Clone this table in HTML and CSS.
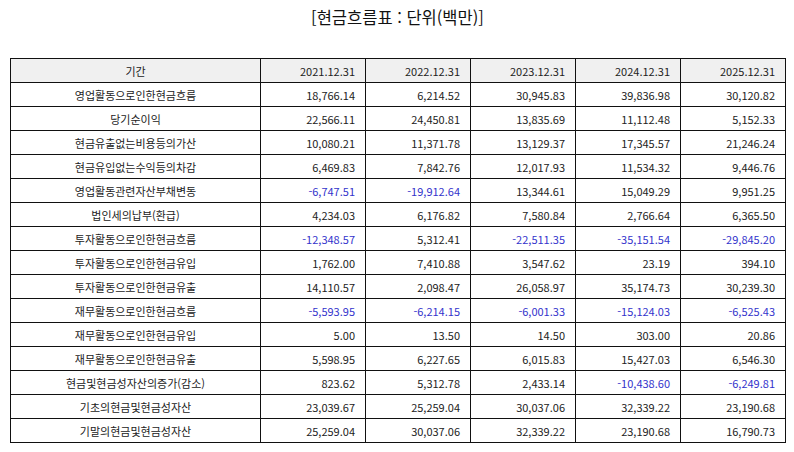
FILE: index.html
```html
<!DOCTYPE html>
<html lang="ko">
<head>
<meta charset="utf-8">
<link rel="stylesheet" href="styles.css">
</head>
<body>
<div class="page">
  <h1 class="title">[현금흐름표 : 단위(백만)]</h1>
  <table class="cf">
    <colgroup>
      <col class="c-label"><col class="c-num"><col class="c-num"><col class="c-num"><col class="c-num"><col class="c-num">
    </colgroup>
    <thead>
      <tr><th class="lbl">기간</th><th>2021.12.31</th><th>2022.12.31</th><th>2023.12.31</th><th>2024.12.31</th><th>2025.12.31</th></tr>
    </thead>
    <tbody>
      <tr><td class="lbl">영업활동으로인한현금흐름</td><td>18,766.14</td><td>6,214.52</td><td>30,945.83</td><td>39,836.98</td><td>30,120.82</td></tr>
      <tr><td class="lbl">당기순이익</td><td>22,566.11</td><td>24,450.81</td><td>13,835.69</td><td>11,112.48</td><td>5,152.33</td></tr>
      <tr><td class="lbl">현금유출없는비용등의가산</td><td>10,080.21</td><td>11,371.78</td><td>13,129.37</td><td>17,345.57</td><td>21,246.24</td></tr>
      <tr><td class="lbl">현금유입없는수익등의차감</td><td>6,469.83</td><td>7,842.76</td><td>12,017.93</td><td>11,534.32</td><td>9,446.76</td></tr>
      <tr><td class="lbl">영업활동관련자산부채변동</td><td class="neg">-6,747.51</td><td class="neg">-19,912.64</td><td>13,344.61</td><td>15,049.29</td><td>9,951.25</td></tr>
      <tr><td class="lbl">법인세의납부(환급)</td><td>4,234.03</td><td>6,176.82</td><td>7,580.84</td><td>2,766.64</td><td>6,365.50</td></tr>
      <tr><td class="lbl">투자활동으로인한현금흐름</td><td class="neg">-12,348.57</td><td>5,312.41</td><td class="neg">-22,511.35</td><td class="neg">-35,151.54</td><td class="neg">-29,845.20</td></tr>
      <tr><td class="lbl">투자활동으로인한현금유입</td><td>1,762.00</td><td>7,410.88</td><td>3,547.62</td><td>23.19</td><td>394.10</td></tr>
      <tr><td class="lbl">투자활동으로인한현금유출</td><td>14,110.57</td><td>2,098.47</td><td>26,058.97</td><td>35,174.73</td><td>30,239.30</td></tr>
      <tr><td class="lbl">재무활동으로인한현금흐름</td><td class="neg">-5,593.95</td><td class="neg">-6,214.15</td><td class="neg">-6,001.33</td><td class="neg">-15,124.03</td><td class="neg">-6,525.43</td></tr>
      <tr><td class="lbl">재무활동으로인한현금유입</td><td>5.00</td><td>13.50</td><td>14.50</td><td>303.00</td><td>20.86</td></tr>
      <tr><td class="lbl">재무활동으로인한현금유출</td><td>5,598.95</td><td>6,227.65</td><td>6,015.83</td><td>15,427.03</td><td>6,546.30</td></tr>
      <tr><td class="lbl">현금및현금성자산의증가(감소)</td><td>823.62</td><td>5,312.78</td><td>2,433.14</td><td class="neg">-10,438.60</td><td class="neg">-6,249.81</td></tr>
      <tr><td class="lbl">기초의현금및현금성자산</td><td>23,039.67</td><td>25,259.04</td><td>30,037.06</td><td>32,339.22</td><td>23,190.68</td></tr>
      <tr><td class="lbl">기말의현금및현금성자산</td><td>25,259.04</td><td>30,037.06</td><td>32,339.22</td><td>23,190.68</td><td>16,790.73</td></tr>
    </tbody>
  </table>
</div>
</body>
</html>
```

FILE: styles.css
```css
html, body {
  margin: 0;
  padding: 0;
  background: #ffffff;
}
.page {
  padding: 0 9px 0 10px;
  font-family: "Noto Sans CJK KR", "Noto Sans", sans-serif;
  color: #222222;
}
.title {
  margin: 0;
  height: 58px;
  padding-top: 5px;
  box-sizing: border-box;
  font-size: 16.5px;
  font-weight: 400;
  line-height: 24px;
  text-align: center;
  color: #111111;
}
.cf {
  border-collapse: collapse;
  table-layout: fixed;
  width: 776px;
  font-size: 11px;
}
.c-label { width: 250px; }
.c-num { width: 105px; }
.cf tr {
  height: 24px;
}
.cf th, .cf td {
  border: 1px solid #111111;
  height: 24px;
  padding: 0 10px 0 6px;
  text-align: right;
  font-weight: 400;
  line-height: 14px;
  white-space: nowrap;
  box-sizing: border-box;
}
.cf th {
  background: #f0f0f0;
}
.cf .lbl {
  text-align: center;
  padding: 0 6px;
}
.cf .neg {
  color: #3333cc;
}
```
